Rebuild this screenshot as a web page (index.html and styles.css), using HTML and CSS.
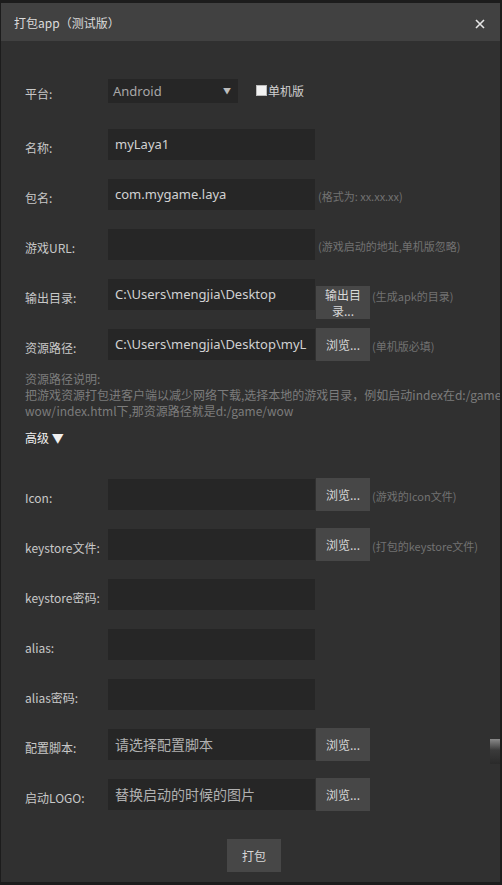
FILE: index.html
```html
<!DOCTYPE html>
<html>
<head>
<meta charset="utf-8">
<link rel="stylesheet" href="styles.css">
</head>
<body>
<div class="window">
  <div class="titlebar">
    <span class="title">打包app（测试版）</span>
    <svg class="close" width="10" height="10" viewBox="0 0 10 10"><path d="M1 1L9 9M9 1L1 9" stroke="#e6e6e6" stroke-width="1.6" fill="none"/></svg>
  </div>
  <div class="content">
    <div class="row row-platform">
      <span class="label">平台:</span>
      <div class="select"><span>Android</span><span class="arrow">▼</span></div>
      <label class="check"><span class="box"></span>单机版</label>
    </div>
    <div class="row">
      <span class="label">名称:</span>
      <div class="input">myLaya1</div>
    </div>
    <div class="row">
      <span class="label">包名:</span>
      <div class="input">com.mygame.laya</div>
      <span class="hint hint-near">(格式为: xx.xx.xx)</span>
    </div>
    <div class="row">
      <span class="label">游戏URL:</span>
      <div class="input"></div>
      <span class="hint hint-near">(游戏启动的地址,单机版忽略)</span>
    </div>
    <div class="row">
      <span class="label">输出目录:</span>
      <div class="input">C:\Users\mengjia\Desktop</div>
      <div class="btn btn-two">输出目<br>录...</div>
      <span class="hint">(生成apk的目录)</span>
    </div>
    <div class="row">
      <span class="label">资源路径:</span>
      <div class="input">C:\Users\mengjia\Desktop\myL</div>
      <div class="btn">浏览...</div>
      <span class="hint">(单机版必填)</span>
    </div>
    <div class="desc">
      <div>资源路径说明:</div>
      <div>把游戏资源打包进客户端以减少网络下载,选择本地的游戏目录，例如启动index在d:/game/</div>
      <div>wow/index.html下,那资源路径就是d:/game/wow</div>
    </div>
    <div class="advanced">高级 ▼</div>
    <div class="row">
      <span class="label">Icon:</span>
      <div class="input"></div>
      <div class="btn">浏览...</div>
      <span class="hint">(游戏的Icon文件)</span>
    </div>
    <div class="row">
      <span class="label">keystore文件:</span>
      <div class="input"></div>
      <div class="btn">浏览...</div>
      <span class="hint">(打包的keystore文件)</span>
    </div>
    <div class="row">
      <span class="label">keystore密码:</span>
      <div class="input"></div>
    </div>
    <div class="row">
      <span class="label">alias:</span>
      <div class="input"></div>
    </div>
    <div class="row">
      <span class="label">alias密码:</span>
      <div class="input"></div>
    </div>
    <div class="row">
      <span class="label">配置脚本:</span>
      <div class="input placeholder">请选择配置脚本</div>
      <div class="btn">浏览...</div>
    </div>
    <div class="row">
      <span class="label">启动LOGO:</span>
      <div class="input placeholder">替换启动的时候的图片</div>
      <div class="btn">浏览...</div>
    </div>
    <div class="submit-wrap"><div class="submit">打包</div></div>
  </div>
  <div class="grip"></div>
</div>
</body>
</html>
```
FILE: styles.css
```css
html, body {
  margin: 0;
  padding: 0;
}
body {
  background: #1c1c1c;
  width: 502px;
  height: 885px;
  overflow: hidden;
  font-family: "Noto Sans CJK SC", sans-serif;
  font-size: 12px;
  color: #c8c8c8;
}
.window {
  position: relative;
  margin: 3px 0 0 1px;
  width: 499px;
  height: 879px;
  background: #303030;
  overflow: hidden;
}
.titlebar {
  height: 38px;
  background: #414141;
  display: flex;
  align-items: center;
  justify-content: space-between;
  padding: 0 15px 0 13px;
}
.title {
  color: #dcdcdc;
  font-size: 12px;
}
.close {
  display: block;
  margin-top: 3px;
}
.content {
  padding: 38px 0 0 24px;
}
.row {
  display: flex;
  align-items: center;
  height: 31px;
  margin-bottom: 19px;
}
.row-platform {
  height: 24px;
  margin-bottom: 26px;
}
.label {
  width: 83px;
  flex: none;
  padding-top: 5px;
  color: #c8c8c8;
  white-space: nowrap;
}
.select {
  width: 130px;
  height: 24px;
  background: #262626;
  color: #a8a8a8;
  font-family: "Noto Sans", "Noto Sans CJK SC", sans-serif;
  font-size: 13px;
  display: flex;
  align-items: center;
  justify-content: space-between;
  padding: 0 7px 0 5px;
  box-sizing: border-box;
}
.arrow {
  font-size: 8px;
  color: #bdbdbd;
  margin-top: -2px;
}
.check {
  display: flex;
  align-items: center;
  margin-left: 18px;
  align-self: flex-start;
  margin-top: 3px;
  color: #d0d0d0;
}
.box {
  width: 9px;
  height: 9px;
  background: #f2f2f2;
  border: 1px solid #bbb;
  margin-right: 1px;
}
.input {
  width: 207px;
  height: 31px;
  flex: none;
  background: #262626;
  color: #d2d2d2;
  font-family: "Noto Sans", "Noto Sans CJK SC", sans-serif;
  font-size: 13px;
  line-height: 31px;
  padding-left: 7px;
  box-sizing: border-box;
  white-space: nowrap;
  overflow: hidden;
}
.placeholder {
  color: #b0b0b0;
  font-size: 14px;
}
.btn {
  width: 54px;
  height: 33px;
  flex: none;
  margin-left: 1px;
  background: #474747;
  color: #d8d8d8;
  display: flex;
  align-items: center;
  justify-content: center;
  text-align: center;
  box-sizing: border-box;
}
.btn-two {
  align-self: flex-start;
  margin-top: 7px;
  line-height: 16px;
  padding-top: 1px;
}
.hint {
  margin-left: 2px;
  padding-top: 2px;
  color: #727272;
  font-size: 11px;
  white-space: nowrap;
}
.hint-near {
  margin-left: 3px;
}
.desc {
  margin-top: -8px;
  color: #7c7c7c;
  line-height: 16px;
  font-size: 12px;
  white-space: nowrap;
}
.advanced {
  margin-top: 11px;
  margin-bottom: 33px;
  line-height: 16px;
  color: #f0f0f0;
  font-size: 12px;
}
.submit-wrap {
  padding-left: 202px;
  margin-top: 29px;
}
.submit {
  width: 54px;
  height: 33px;
  background: #474747;
  color: #d8d8d8;
  display: flex;
  align-items: center;
  justify-content: center;
}
.grip {
  position: absolute;
  left: 489px;
  top: 736px;
  width: 12px;
  height: 25px;
  background: linear-gradient(#8a8a8a, #3a3a3a 45%, #2a2a2a);
}
```
